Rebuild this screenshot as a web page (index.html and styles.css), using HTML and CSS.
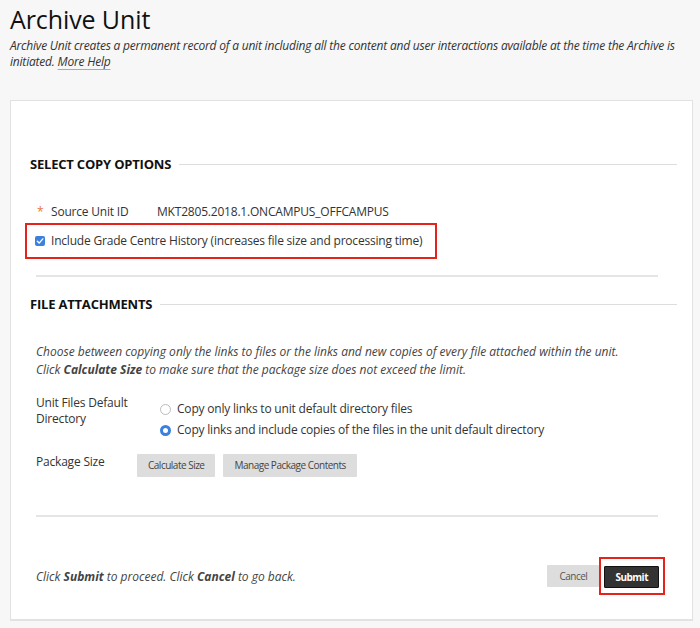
FILE: index.html
```html
<!DOCTYPE html>
<html lang="en">
<head>
<meta charset="utf-8">
<title>Archive Unit</title>
<link rel="stylesheet" href="styles.css">
</head>
<body>
<div class="page">
  <h1 class="title">Archive Unit</h1>
  <p class="desc">Archive Unit creates a permanent record of a unit including all the content and user interactions available at the time the Archive is initiated. <a class="help" href="#">More Help</a></p>

  <div class="panel">
    <div class="section-head"><h2>Select Copy Options</h2><span class="rule"></span></div>
    <div class="field-row">
      <span class="req">*</span>
      <span class="label-src">Source Unit ID</span>
      <span class="value">MKT2805.2018.1.ONCAMPUS_OFFCAMPUS</span>
    </div>
    <div class="check-row">
      <span class="checkbox"><svg width="10" height="10" viewBox="0 0 10 10"><path d="M2.3 5.2 L4.2 7.1 L7.8 2.9" fill="none" stroke="#fff" stroke-width="1.4" stroke-linecap="round" stroke-linejoin="round"/></svg></span>
      <span>Include Grade Centre History (increases file size and processing time)</span>
    </div>
    <div class="hr"></div>

    <div class="section-head second"><h2>File Attachments</h2><span class="rule"></span></div>
    <p class="instr">Choose between copying only the links to files or the links and new copies of every file attached within the unit.<br>Click <b>Calculate Size</b> to make sure that the package size does not exceed the limit.</p>

    <div class="opt-row">
      <div class="opt-label">Unit Files Default<br>Directory</div>
      <div class="radios">
        <div class="radio-item"><span class="radio"></span>Copy only links to unit default directory files</div>
        <div class="radio-item"><span class="radio on"></span>Copy links and include copies of the files in the unit default directory</div>
      </div>
    </div>
    <div class="opt-row pkg">
      <div class="opt-label">Package Size</div>
      <div class="btns">
        <span class="btn">Calculate Size</span>
        <span class="btn">Manage Package Contents</span>
      </div>
    </div>
    <div class="hr bottom"></div>

    <div class="footer">
      <p class="footer-text">Click <b>Submit</b> to proceed. Click <b>Cancel</b> to go back.</p>
      <div class="actions">
        <span class="btn cancel">Cancel</span>
        <span class="submit-wrap"><span class="btn submit">Submit</span></span>
      </div>
    </div>
  </div>
</div>
</body>
</html>
```
FILE: styles.css
```css
html, body {
  margin: 0;
  padding: 0;
  background: #f7f7f7;
}
body {
  font-family: "Open Sans", "DejaVu Sans", sans-serif;
  letter-spacing: -0.2px;
  color: #333;
}
.page {
  padding: 0 7px 9px 10px;
}
.title {
  margin: 0;
  padding-top: 1px;
  font-size: 25px;
  font-weight: 400;
  line-height: 36px;
  letter-spacing: -0.1px;
  color: #111;
}
.desc {
  margin: 1px 0 0;
  font-size: 12px;
  font-style: italic;
  line-height: 16px;
  color: #333;
}
.help {
  color: #333;
  text-decoration: underline;
  text-decoration-color: #aaa;
  text-underline-offset: 3px;
}
.panel {
  margin-top: 30px;
  background: #fff;
  border: 1px solid #e2e2e2;
  border-bottom-width: 2px;
  padding: 54px 15px 24px 19px;
}
.section-head {
  display: flex;
  align-items: center;
  gap: 8px;
}
.section-head h2 {
  margin: 0;
  font-size: 13px;
  font-weight: 700;
  text-transform: uppercase;
  color: #111;
  line-height: 18px;
}
.section-head .rule {
  flex: 1;
  height: 1px;
  background: #ddd;
}
.field-row {
  display: flex;
  align-items: center;
  margin-top: 30px;
  padding-left: 7px;
  font-size: 12px;
  line-height: 18px;
}
.req {
  color: #e8743b;
  width: 14px;
}
.label-src {
  width: 106px;
}
.check-row {
  display: inline-flex;
  align-items: center;
  gap: 6px;
  margin-top: 2px;
  margin-left: -5px;
  padding: 7px 13px 7px 8px;
  border: 2px solid #e5231b;
  font-size: 12px;
  line-height: 18px;
}
.checkbox {
  width: 10px;
  height: 10px;
  border-radius: 2px;
  background: #3a80dc;
  display: flex;
}
.hr {
  height: 2px;
  background: #e5e5e5;
  margin: 16px 19px 0 6px;
}
.section-head.second {
  margin-top: 18px;
}
.instr {
  margin: 30px 0 0 6px;
  font-size: 12px;
  font-style: italic;
  letter-spacing: 0;
  line-height: 18px;
  color: #444;
}
.opt-row {
  display: flex;
  margin-top: 16px;
  padding-left: 6px;
  font-size: 12px;
  line-height: 16px;
}
.opt-label {
  width: 124px;
}
.radios {
  display: flex;
  flex-direction: column;
  gap: 5px;
  margin-top: 6px;
}
.radio-item {
  display: flex;
  align-items: center;
  gap: 6px;
}
.radio {
  width: 9px;
  height: 9px;
  border: 1px solid #bbb;
  border-radius: 50%;
  box-sizing: content-box;
}
.radio.on {
  width: 5px;
  height: 5px;
  border: 3px solid #3a80dc;
  background: #fff;
}
.opt-row.pkg {
  margin-top: 16px;
}
.pkg .opt-label {
  width: 101px;
}
.btns {
  display: flex;
  gap: 8px;
  margin-top: 0;
}
.btn {
  display: inline-block;
  background: #ddd;
  color: #444;
  font-size: 10px;
  letter-spacing: -0.5px;
  line-height: 23px;
  padding: 0 11px;
  border-radius: 1px;
}
.hr.bottom {
  margin-top: 38px;
}
.footer {
  display: flex;
  align-items: center;
  justify-content: space-between;
  margin-top: 40px;
  padding-left: 6px;
  padding-right: 12px;
}
.footer-text {
  margin: 0;
  font-size: 12px;
  font-style: italic;
  letter-spacing: 0;
  color: #444;
}
.actions {
  display: flex;
  align-items: center;
}
.btn.cancel {
  padding: 0 12px;
  line-height: 22px;
  color: #555;
}
.submit-wrap {
  display: inline-block;
  border: 2px solid #e5231b;
  padding: 5px 4px 5px 3px;
}
.btn.submit {
  background: #333;
  color: #fff;
  font-weight: 700;
  line-height: 20px;
  padding: 0 10px;
  border: 1px solid #111;
}
```
